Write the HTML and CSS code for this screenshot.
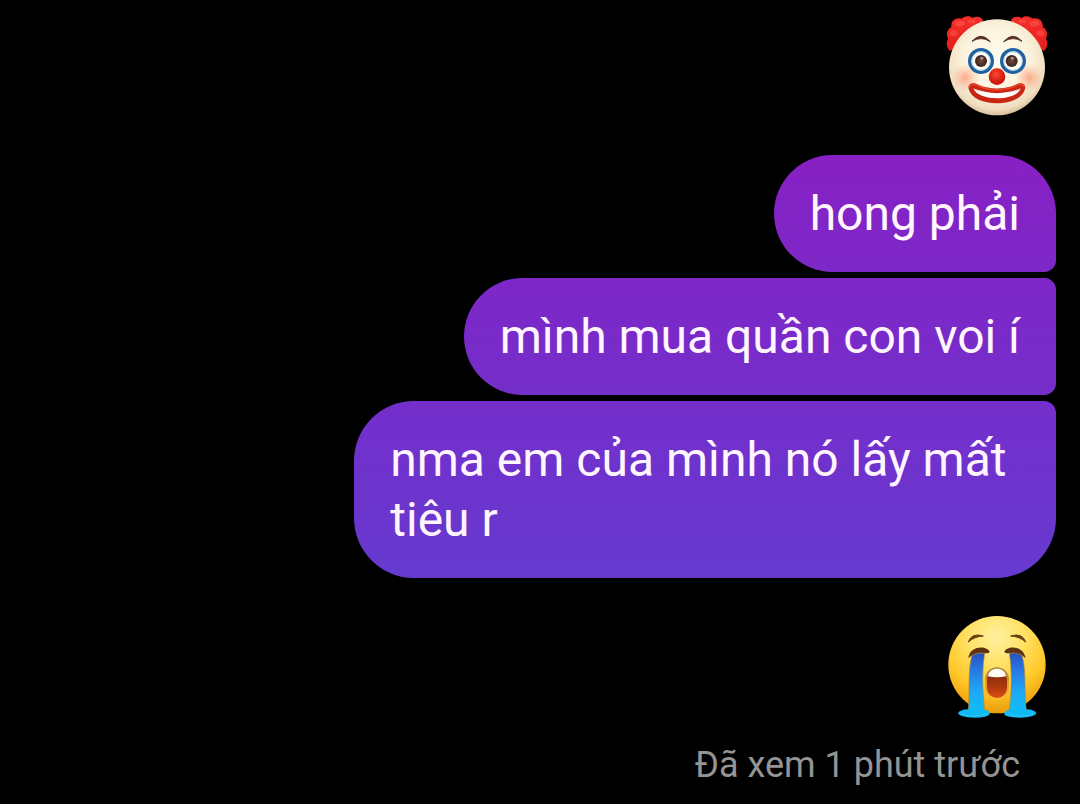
FILE: index.html
```html
<!DOCTYPE html>
<html lang="vi">
<head>
<meta charset="utf-8">
<meta name="viewport" content="width=device-width, initial-scale=1">
<title>Tin nhắn</title>
<link rel="stylesheet" href="styles.css">
</head>
<body>
<main class="chat">
  <svg class="emoji" viewBox="-3 0 360 360" role="img" aria-label="🤡">
    <defs>
      <radialGradient id="skin" cx=".49" cy=".42" r=".6">
        <stop offset="0" stop-color="#fffdf0"/><stop offset=".6" stop-color="#fbf2dc"/><stop offset=".86" stop-color="#f0dfc0"/><stop offset="1" stop-color="#d0b48e"/>
      </radialGradient>
      <radialGradient id="blush"><stop offset="0" stop-color="#ff7a58" stop-opacity=".6"/><stop offset="1" stop-color="#ff9a78" stop-opacity="0"/></radialGradient>
      <radialGradient id="nose" cx=".45" cy=".35"><stop offset="0" stop-color="#fb4a30"/><stop offset="1" stop-color="#cf1710"/></radialGradient>
      <radialGradient id="iris"><stop offset="0" stop-color="#6d4b3c"/><stop offset="1" stop-color="#3f2218"/></radialGradient>
      <linearGradient id="teeth" x2="0" y2="1"><stop offset="0" stop-color="#d8c9c3"/><stop offset=".5" stop-color="#fff"/></linearGradient>
      <linearGradient id="hair" x2="0" y2="1"><stop offset="0" stop-color="#f42f2b"/><stop offset="1" stop-color="#e51f1d"/></linearGradient>
    </defs>
    <path d="M40 135C28 126 26 108 34 98C25 86 31 68 43 64C40 45 56 33 74 38C86 28 99 29 106 36C117 29 132 31 138 42L100 100ZM320 135C332 126 334 108 326 98C335 86 329 68 317 64C320 45 304 33 286 38C274 28 261 29 254 36C243 29 228 31 222 42L260 100Z" fill="url(#hair)"/>
    <g fill="#ff5750" opacity=".55"><ellipse cx="68" cy="53" rx="15" ry="9"/><ellipse cx="104" cy="46" rx="11" ry="6"/><ellipse cx="50" cy="82" rx="11" ry="9"/><ellipse cx="292" cy="53" rx="15" ry="9"/><ellipse cx="256" cy="46" rx="11" ry="6"/><ellipse cx="310" cy="82" rx="11" ry="9"/></g>
    <circle cx="180" cy="184" r="144" fill="url(#skin)"/>
    <circle cx="85" cy="215" r="42" fill="url(#blush)"/><circle cx="276" cy="215" r="42" fill="url(#blush)"/>
    <g fill="#fffef8" stroke="#20629e" stroke-width="10"><circle cx="132" cy="165" r="34"/><circle cx="228" cy="165" r="34"/></g>
    <g fill="none" stroke="#a5c9df" stroke-width="3"><circle cx="132" cy="165" r="28"/><circle cx="228" cy="165" r="28"/></g>
    <g fill="url(#iris)"><circle cx="132" cy="165" r="18"/><circle cx="224" cy="165" r="18"/></g>
    <g fill="#ae9182"><ellipse cx="134" cy="157" rx="5" ry="4"/><ellipse cx="226" cy="157" rx="5" ry="4"/></g>
    <path d="M105 106Q132 75 160 107Q132 89 105 106ZM200 107Q228 75 255 106Q228 89 200 107Z" fill="#543027" stroke="#543027" stroke-width="3" stroke-linejoin="round"/>
    <path d="M95 249C91 230 112 228 124 236C158 251 202 251 236 236C249 228 268 230 264 249C250 306 109 306 95 249Z" fill="#c92512"/>
    <path d="M98 244C98 232 114 233 125 240C158 255 202 255 235 240C246 233 261 232 261 244" fill="none" stroke="#e8432b" stroke-width="5"/>
    <path d="M109 247Q180 276 251 247C241 287 121 287 109 247Z" fill="url(#teeth)"/>
    <circle cx="180" cy="212" r="25" fill="url(#nose)"/>
  </svg>
  <p class="bubble bubble-first">hong phải</p>
  <p class="bubble bubble-middle">mình mua quần con voi í</p>
  <p class="bubble bubble-last">nma em của mình nó lấy mất tiêu r</p>
  <svg class="emoji" viewBox="-3 0 360 360" role="img" aria-label="😭">
    <defs>
      <radialGradient id="face" cx=".49" cy=".22" r=".78">
        <stop offset="0" stop-color="#fff09e"/><stop offset=".35" stop-color="#ffe268"/><stop offset=".7" stop-color="#ffc829"/><stop offset="1" stop-color="#ed9c0b"/>
      </radialGradient>
      <linearGradient id="tear" x2="0" y2="1"><stop offset="0" stop-color="#2750bd"/><stop offset=".3" stop-color="#2878e5"/><stop offset=".65" stop-color="#1fa6f4"/><stop offset="1" stop-color="#11bdf7"/></linearGradient>
      <linearGradient id="mouth" x2="0" y2="1"><stop offset="0" stop-color="#762b0b"/><stop offset=".55" stop-color="#a8360d"/><stop offset="1" stop-color="#e34d18"/></linearGradient>
      <linearGradient id="lip" x2="0" y2="1"><stop offset="0" stop-color="#a58345"/><stop offset=".5" stop-color="#e49b28"/><stop offset="1" stop-color="#ffbe35"/></linearGradient>
    </defs>
    <circle cx="180" cy="176" r="146" fill="url(#face)"/>
    <path d="M94 108Q104 79 139 90Q113 91 94 108ZM221 90Q256 79 266 108Q247 91 221 90Z" fill="#664112" stroke="#664112" stroke-width="3" stroke-linejoin="round"/>
    <g fill="url(#tear)" stroke="#b78a28" stroke-width="2">
      <path d="M105 148Q122 137 143 142C135 190 136 250 143 312L94 314C99 260 91 195 105 148Z"/>
      <path d="M255 148Q238 137 217 142C225 190 224 250 217 312L268 314C261 260 269 195 255 148Z"/>
    </g>
    <path d="M63 322Q68 311 94 310Q119 301 143 311Q160 315 159 323Q153 335 111 335Q67 334 63 322ZM201 323Q201 315 217 311Q241 301 268 310Q294 311 298 322Q294 334 250 335Q206 335 201 323Z" fill="#10b9f3"/>
    <path d="M71 323Q105 337 151 323M209 323Q255 337 290 323" fill="none" stroke="#30c6f8" stroke-width="3"/>
    <path d="M94 157C97 117 151 118 158 137Q155 144 143 141Q113 136 94 157ZM202 137C209 118 260 117 266 157Q247 136 217 141Q205 144 202 137Z" fill="#613212"/>
    <rect x="147" y="187" width="66" height="92" rx="33" fill="url(#mouth)" stroke="url(#lip)" stroke-width="6"/>
    <path d="M153 211C156 181 204 181 207 211Q180 217 153 211Z" fill="#fffaf2"/>
  </svg>
  <p class="seen">Đã xem 1 phút trước</p>
</main>
</body>
</html>
```
FILE: styles.css
```css
* { box-sizing: border-box; }

body {
  margin: 0;
  background: #000;
  font-family: Roboto, "Noto Sans", sans-serif;
}

.chat {
  display: flex;
  flex-direction: column;
  align-items: flex-end;
  gap: 6px;
  padding: 6px 24px 16px;
}

.emoji {
  width: 120px;
  height: 120px;
}

.bubble {
  max-width: 68%;
  margin: 0;
  padding: 29px 36px 28px;
  border-radius: 60px;
  color: #fff5ff;
  font-size: 48px;
  line-height: 60px;
}

.bubble-first {
  margin-top: 23px;
  border-bottom-right-radius: 12px;
  background: linear-gradient(#8820c4, #7d28c7);
}

.bubble-middle {
  border-top-right-radius: 12px;
  border-bottom-right-radius: 12px;
  background: linear-gradient(#7e27c8, #742ec9);
}

.bubble-last {
  margin-bottom: 22px;
  border-top-right-radius: 12px;
  background: linear-gradient(#742ecb, #663acf);
}

.seen {
  margin: 11px 36px 0 0;
  color: #949494;
  font-size: 36px;
  line-height: 44px;
}
```
